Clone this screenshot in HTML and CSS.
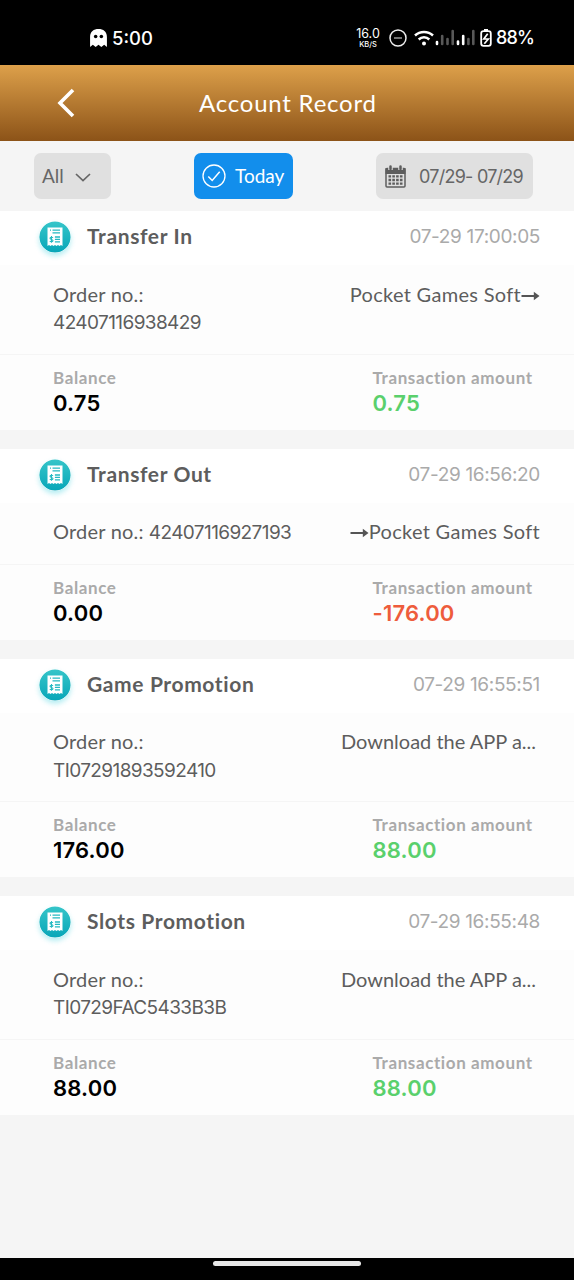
FILE: index.html
```html
<!DOCTYPE html>
<html lang="en">
<head>
<meta charset="utf-8">
<title>Account Record</title>
<link rel="stylesheet" href="styles.css">
</head>
<body>
<svg class="defs" width="0" height="0" aria-hidden="true">
  <defs>
    <linearGradient id="teal" x1="0" y1="0" x2="0" y2="1"><stop offset="0" stop-color="#35c5c9"/><stop offset="1" stop-color="#08a6b8"/></linearGradient>
    <symbol id="receipt" viewBox="0 0 32 32">
      <circle cx="16" cy="16" r="15.6" fill="url(#teal)"/>
      <path d="M8.500 6.500h15v18.600l-1.500-1-1.500 1-1.500-1-1.500 1-1.500-1-1.500 1-1.500-1-1.500 1-1.500-1-1.500 1z" fill="#fff"/>
      <path d="M13.500 9.200h7.500M13.500 11.900h7.500M15.900 16h5.100M15.900 18.400h5.100M15.900 20.800h5.100M11 9.200h1" stroke="#24b9c2" stroke-width="1.300"/>
      <path d="M14 16.800c-.6-.9-3-.8-3 .5 0 1.400 3 .9 3 2.300 0 1.400-2.500 1.400-3.200.4M12.500 15v6.800" fill="none" stroke="#24b9c2" stroke-width="1.100"/>
    </symbol>
    <symbol id="arrow" viewBox="0 0 19 12">
      <path d="M.5 6h14" stroke="#555" stroke-width="2"/><path d="M12.800 1.800 18.500 6l-5.700 4.200z" fill="#555"/>
    </symbol>
  </defs>
</svg>
<div class="screen">
  <div class="status">
    <svg class="ghost" viewBox="0 0 18 19"><path d="M1 18V8.500C1 3.500 4.500 1 9 1s8 2.500 8 7.500V18l-2.600-2-2.700 2L9 16l-2.700 2-2.700-2z" fill="#fff"/><circle cx="6.300" cy="8" r="1.700"/><circle cx="11.700" cy="8" r="1.700"/></svg>
    <span class="clock">5:00</span>
    <span class="speed"><b>16.0</b><i>KB/S</i></span>
    <svg class="dnd" viewBox="0 0 18 18"><circle cx="9" cy="9" r="8" fill="none" stroke="#eee" stroke-width="1.500"/><path d="M5 9h8" stroke="#999" stroke-width="1.500"/></svg>
    <svg class="wifi" viewBox="0 0 20 16"><g fill="none" stroke="#fff" stroke-width="2.500"><path d="M1 5.500C6 .8 14 .8 19 5.500"/><path d="M4.700 9.500c3-2.900 7.600-2.900 10.600 0"/></g><circle cx="10" cy="13.500" r="2" fill="#fff"/></svg>
    <svg class="signal" viewBox="0 0 40 17"><g stroke-width="2.600" stroke-linecap="round"><path d="M2 13v2M23 12.500v2.500M28.200 7v8" stroke="#fff"/><path d="M7.200 7v8M12.500 10v5M17.700 2v13M33.400 10v5M38.300 2v13" stroke="#585858"/></g></svg>
    <svg class="battery" viewBox="0 0 12 18"><path d="M4 1h4" stroke="#fff" stroke-width="2"/><rect x="1.200" y="2.200" width="9.600" height="14.600" rx="2.300" fill="none" stroke="#fff" stroke-width="1.800"/><path d="M7.700 4.800 3.800 10h4.500l-4 4.800" fill="none" stroke="#fff" stroke-width="1.700"/></svg>
    <span class="percent">88%</span>
  </div>
  <header class="header">
    <svg class="back" viewBox="0 0 18 30"><path d="M16 2 3 15l13 13" fill="none" stroke="#fff" stroke-width="3.600"/></svg>
    <h1 class="title">Account Record</h1>
  </header>
  <nav class="filters">
    <div class="pill all"><span class="all-label">All</span><svg class="chev" viewBox="0 0 16 9"><path d="m1 1 7 6.500L15 1" fill="none" stroke="#666" stroke-width="1.700"/></svg></div>
    <div class="pill today"><svg class="check" viewBox="0 0 24 24"><circle cx="12" cy="12" r="11" fill="none" stroke="#fff" stroke-width="1.300"/><path d="m6.300 12.400 3.900 4 7.500-8.600" fill="none" stroke="#fff" stroke-width="1.500"/></svg><span class="today-label">Today</span></div>
    <div class="pill range"><svg class="cal" viewBox="0 0 21 23"><rect x="1" y="3.500" width="19" height="18.500" rx="1" fill="none" stroke="#5d5d5d" stroke-width="1.500"/><path d="M.5 3h20v6H.5z" fill="#5d5d5d"/><path d="M5.500 0v5M15.500 0v5" stroke="#e0e0e0" stroke-width="4.500"/><path d="M5.500 1.500v2.500M15.500 1.500v2.500" stroke="#5d5d5d" stroke-width="2.500" stroke-linecap="round"/><path d="M3.500 11.300h14M3.500 15h14M3.500 18.700h14" stroke="#5d5d5d" stroke-width="2.300" stroke-dasharray="2.600 1.200"/></svg><span class="range-label">07/29- 07/29</span></div>
  </nav>
  <main class="list">
    <article class="card">
      <div class="head"><svg class="icon"><use href="#receipt"/></svg><h2 class="name">Transfer In</h2><time class="time">07-29 17:00:05</time></div>
      <div class="body"><p class="order"><span class="label">Order no.:</span><br><span class="num">42407116938429</span></p><p class="game">Pocket Games Soft<svg class="arrow"><use href="#arrow"/></svg></p></div>
      <div class="foot"><div class="cell"><p class="cap">Balance</p><p class="val">0.75</p></div><div class="cell"><p class="cap">Transaction amount</p><p class="val plus">0.75</p></div></div>
    </article>
    <article class="card">
      <div class="head"><svg class="icon"><use href="#receipt"/></svg><h2 class="name">Transfer Out</h2><time class="time">07-29 16:56:20</time></div>
      <div class="body"><p class="order"><span class="label">Order no.:</span> <span class="num">42407116927193</span></p><p class="game"><svg class="arrow"><use href="#arrow"/></svg>Pocket Games Soft</p></div>
      <div class="foot"><div class="cell"><p class="cap">Balance</p><p class="val">0.00</p></div><div class="cell"><p class="cap">Transaction amount</p><p class="val minus">-176.00</p></div></div>
    </article>
    <article class="card">
      <div class="head"><svg class="icon"><use href="#receipt"/></svg><h2 class="name">Game Promotion</h2><time class="time">07-29 16:55:51</time></div>
      <div class="body"><p class="order"><span class="label">Order no.:</span><br><span class="num">TI07291893592410</span></p><p class="game promo">Download the APP a...</p></div>
      <div class="foot"><div class="cell"><p class="cap">Balance</p><p class="val">176.00</p></div><div class="cell"><p class="cap">Transaction amount</p><p class="val plus">88.00</p></div></div>
    </article>
    <article class="card">
      <div class="head"><svg class="icon"><use href="#receipt"/></svg><h2 class="name">Slots Promotion</h2><time class="time">07-29 16:55:48</time></div>
      <div class="body"><p class="order"><span class="label">Order no.:</span><br><span class="num">TI0729FAC5433B3B</span></p><p class="game promo">Download the APP a...</p></div>
      <div class="foot"><div class="cell"><p class="cap">Balance</p><p class="val">88.00</p></div><div class="cell"><p class="cap">Transaction amount</p><p class="val plus">88.00</p></div></div>
    </article>
  </main>
  <div class="navbar"><div class="handle"></div></div>
</div>
</body>
</html>
```

FILE: styles.css
```css
* { box-sizing: border-box; margin: 0; padding: 0; }
body { background: #f5f5f5; font-family: Lato, "Liberation Sans", sans-serif; color: #5d5d5d; }
.defs { display: block; position: absolute; }
.screen { width: 574px; height: 1280px; display: flex; flex-direction: column; overflow: hidden; }
svg { flex: none; }

.status { height: 65px; flex: none; background: #000; color: #fff; display: flex; align-items: center; padding: 10px 0 0 89px; }
.ghost { width: 19px; height: 20px; }
.clock { width: 44px; margin-left: 4px; font: 500 18.5px Inter, sans-serif; white-space: nowrap; }
.speed { width: 28px; margin-left: 198px; display: flex; flex-direction: column; align-items: center; }
.speed b { font: 400 12.5px/13px Inter, sans-serif; }
.speed i { font: 500 7.5px/9px Inter, sans-serif; }
.dnd { width: 18px; height: 18px; margin-left: 7px; }
.wifi { width: 20px; height: 16px; margin-left: 7px; }
.signal { width: 40px; height: 17px; margin-left: 1px; }
.battery { width: 12px; height: 18px; margin-left: 5px; }
.percent { margin-left: 4px; font: 500 18px Inter, sans-serif; letter-spacing: -.8px; }

.header { height: 76px; flex: none; display: flex; align-items: center; padding-left: 57px; background: linear-gradient(#dda04a, #8c5318); }
.back { width: 18px; height: 30px; }
.title { margin-left: 124px; padding-bottom: 2px; color: #fff; font-size: 24px; font-weight: 400; letter-spacing: .78px; white-space: nowrap; }

.filters { height: 70px; flex: none; display: flex; align-items: center; padding-left: 34px; }
.pill { height: 46px; border-radius: 7px; background: #e0e0e0; display: flex; align-items: center; font-size: 19px; color: #666; white-space: nowrap; }
.pill span { padding-bottom: 2px; }
.all { width: 77px; padding-left: 8px; }
.all-label { width: 33px; }
.chev { width: 16px; height: 9px; margin-top: 2px; }
.today { width: 99px; margin-left: 83px; padding-left: 8px; background: #128eec; color: #fff; }
.check { width: 24px; height: 24px; margin-right: 9px; }
.range { width: 157px; margin-left: 83px; padding-left: 9px; }
.cal { width: 21px; height: 23px; margin-right: 13px; }
.pill .range-label { padding-bottom: 0; font: 400 18px Inter, sans-serif; letter-spacing: -.75px; }

.list { flex: 1; display: flex; flex-direction: column; gap: 19px; }
.card { background: #fdfdfd; }
.head { height: 54px; display: flex; align-items: center; padding: 0 34px 2px 39px; background: #fff; }
.icon { width: 32px; height: 32px; border-radius: 50%; box-shadow: 0 3px 5px rgba(20, 200, 215, .3); }
.name { margin-left: 16px; padding-bottom: 3px; flex: 1; font-size: 21px; font-weight: 700; letter-spacing: .62px; color: #5d5d5d; white-space: nowrap; }
.time { padding-bottom: 1px; font: 400 19px Inter, sans-serif; letter-spacing: -.35px; color: #aaa; white-space: nowrap; }
.body { display: flex; justify-content: space-between; padding: 15.5px 34px 18px 53px; border-bottom: 1px solid #f5f5f5; font-size: 20px; line-height: 27.5px; white-space: nowrap; }
.label { letter-spacing: .2px; }
.num { font: 400 19px/1 Inter, sans-serif; letter-spacing: -.6px; }
.game { letter-spacing: .3px; }
.arrow { width: 19px; height: 12px; }
.promo { padding-right: 4px; letter-spacing: 0; }
.foot { height: 75px; display: grid; grid-template-columns: 319.5px 1fr; padding: 11px 0 0 53px; }
.cap { font-size: 17px; line-height: 23px; font-weight: 700; letter-spacing: .6px; color: #aaa; }
.val { padding-top: 1px; font: 600 22px/27px Inter, sans-serif; letter-spacing: .2px; color: #000; }
.val.plus { color: #5ad06c; }
.val.minus { color: #ee5c3c; }

.navbar { height: 22px; flex: none; background: #000; display: flex; justify-content: center; padding-top: 3px; }
.handle { width: 148px; height: 5px; border-radius: 3px; background: #e8e8e8; }
```
